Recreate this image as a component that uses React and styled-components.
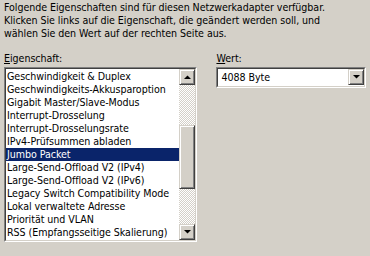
import React from 'react'
import styled, { createGlobalStyle } from 'styled-components'

const GlobalStyle = createGlobalStyle`
  html, body {
    margin: 0;
    padding: 0;
    background: #d4d0c8;
  }
  body {
    font-family: "DejaVu Sans Condensed", "DejaVu Sans", sans-serif;
    font-stretch: condensed;
    font-size: 10.6px;
    letter-spacing: -0.05px;
    color: #000;
  }
`

const items = [
  'Geschwindigkeit & Duplex',
  'Geschwindigkeits-Akkusparoption',
  'Gigabit Master/Slave-Modus',
  'Interrupt-Drosselung',
  'Interrupt-Drosselungsrate',
  'IPv4-Prüfsummen abladen',
  'Jumbo Packet',
  'Large-Send-Offload V2 (IPv4)',
  'Large-Send-Offload V2 (IPv6)',
  'Legacy Switch Compatibility Mode',
  'Lokal verwaltete Adresse',
  'Priorität und VLAN',
  'RSS (Empfangsseitige Skalierung)',
]

const sunken = `
  border-top: 1px solid #808080;
  border-left: 1px solid #808080;
  border-right: 1px solid #ffffff;
  border-bottom: 1px solid #ffffff;
`

const raised = `
  background: #d4d0c8;
  border-top: 1px solid #d4d0c8;
  border-left: 1px solid #d4d0c8;
  border-right: 1px solid #404040;
  border-bottom: 1px solid #404040;
  box-shadow: inset 1px 1px 0 #ffffff, inset -1px -1px 0 #808080;
`

const Page = styled.div`
  width: 370px;
  height: 256px;
  box-sizing: border-box;
  padding: 1px 4px 0 4px;
  display: flex;
  flex-direction: column;
`

const Intro = styled.p`
  margin: 0;
  line-height: 13px;
`

const Columns = styled.div`
  display: flex;
  margin-top: 12px;
  gap: 19px;
`

const Column = styled.div`
  display: flex;
  flex-direction: column;
  width: ${p => p.$width}px;
`

const Label = styled.div`
  line-height: 13px;
  margin-bottom: ${p => p.$gap}px;
  u { text-decoration: underline; text-underline-offset: 1px; }
`

const ListOuter = styled.div`
  ${sunken}
  height: 173px;
`

const ListInner = styled.div`
  height: 100%;
  box-sizing: border-box;
  border-top: 1px solid #404040;
  border-left: 1px solid #404040;
  border-right: 1px solid #d4d0c8;
  border-bottom: 1px solid #d4d0c8;
  background: #fff;
  display: flex;
`

const Rows = styled.div`
  flex: 1;
  padding-top: 1px;
  overflow: hidden;
`

const Row = styled.div`
  height: 13px;
  line-height: 13px;
  padding-left: 1px;
  white-space: nowrap;
  background: ${p => (p.$selected ? '#0a246a' : 'transparent')};
  color: ${p => (p.$selected ? '#ffffff' : '#000000')};
`

const Scrollbar = styled.div`
  width: 16px;
  display: flex;
  flex-direction: column;
  background-color: #ffffff;
  background-image: repeating-conic-gradient(#d4d0c8 0 25%, #ffffff 0 50%);
  background-size: 2px 2px;
`

const ArrowButton = styled.div`
  ${raised}
  width: 16px;
  height: 16px;
  box-sizing: border-box;
  display: flex;
  align-items: center;
  justify-content: center;
  flex: none;
`

const Track = styled.div`
  height: ${p => p.$h}px;
  flex: none;
`

const Thumb = styled.div`
  ${raised}
  box-sizing: border-box;
  height: ${p => p.$h}px;
  flex: none;
`

const Combo = styled.div`
  ${sunken}
  height: 21px;
  box-sizing: border-box;
`

const ComboInner = styled.div`
  height: 100%;
  box-sizing: border-box;
  border-top: 1px solid #404040;
  border-left: 1px solid #404040;
  border-right: 1px solid #d4d0c8;
  border-bottom: 1px solid #d4d0c8;
  background: #fff;
  display: flex;
  align-items: stretch;
`

const ComboText = styled.div`
  flex: 1;
  padding-left: 3px;
  line-height: 17px;
`

const Arrow = ({ down }) => (
  <svg width="7" height="4" viewBox="0 0 7 4">
    {down ? (
      <polygon points="0,0 7,0 3.5,3.5" fill="#000" />
    ) : (
      <polygon points="3.5,0.5 7,4 0,4" fill="#000" />
    )}
  </svg>
)

const App = () => (
  <Page>
    <GlobalStyle />
    <Intro>
      Folgende Eigenschaften sind für diesen Netzwerkadapter verfügbar.<br />
      Klicken Sie links auf die Eigenschaft, die geändert werden soll, und<br />
      wählen Sie den Wert auf der rechten Seite aus.
    </Intro>
    <Columns>
      <Column $width={194}>
        <Label $gap={2}><u>E</u>igenschaft:</Label>
        <ListOuter>
          <ListInner>
            <Rows>
              {items.map(item => (
                <Row key={item} $selected={item === 'Jumbo Packet'}>{item}</Row>
              ))}
            </Rows>
            <Scrollbar>
              <ArrowButton><Arrow /></ArrowButton>
              <Track $h={40} />
              <Thumb $h={64} />
              <Track $h={35} />
              <ArrowButton><Arrow down /></ArrowButton>
            </Scrollbar>
          </ListInner>
        </ListOuter>
      </Column>
      <Column $width={150}>
        <Label $gap={2}><u>W</u>ert:</Label>
        <Combo>
          <ComboInner>
            <ComboText>4088 Byte</ComboText>
            <ArrowButton><Arrow down /></ArrowButton>
          </ComboInner>
        </Combo>
      </Column>
    </Columns>
  </Page>
)

export default App
